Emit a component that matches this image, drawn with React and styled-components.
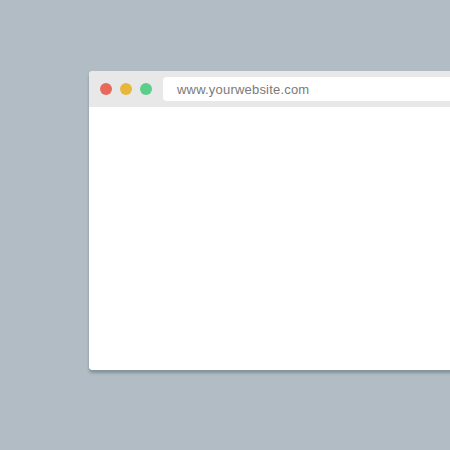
import React from "react";
import styled, { createGlobalStyle } from "styled-components";

const GlobalStyle = createGlobalStyle`
  html, body {
    margin: 0;
    padding: 0;
    background: #b1bcc4;
    overflow: hidden;
  }
  body {
    font-family: "Liberation Sans", Arial, sans-serif;
  }
`;

const Stage = styled.div`
  width: 450px;
  height: 450px;
  padding: 71px 0 0 89px;
  box-sizing: border-box;
  overflow: hidden;
`;

const BrowserWindow = styled.div`
  width: 420px;
  height: 299px;
  background: #ffffff;
  border-radius: 4px;
  box-shadow: 0 3px 3px rgba(80, 95, 105, 0.45);
  overflow: hidden;
  display: flex;
  flex-direction: column;
`;

const TitleBar = styled.div`
  height: 36px;
  background: #e8e8e8;
  display: flex;
  align-items: center;
  padding-left: 11px;
  gap: 8px;
  flex-shrink: 0;
`;

const Dot = styled.span`
  width: 12px;
  height: 12px;
  border-radius: 50%;
  background: ${(p) => p.color};
  flex-shrink: 0;
`;

const AddressBar = styled.div`
  margin-left: 3px;
  flex: 1;
  height: 24px;
  background: #ffffff;
  border-radius: 4px 0 0 4px;
  display: flex;
  align-items: center;
  padding-left: 14px;
  font-size: 13px;
  color: #7a7a7a;
  letter-spacing: 0.2px;
`;

const Content = styled.div`
  flex: 1;
  background: #ffffff;
`;

export default function App() {
  return (
    <>
      <GlobalStyle />
      <Stage>
        <BrowserWindow>
          <TitleBar>
            <Dot color="#e8695c" />
            <Dot color="#e8b73a" />
            <Dot color="#5bcf8a" />
            <AddressBar>www.yourwebsite.com</AddressBar>
          </TitleBar>
          <Content />
        </BrowserWindow>
      </Stage>
    </>
  );
}
